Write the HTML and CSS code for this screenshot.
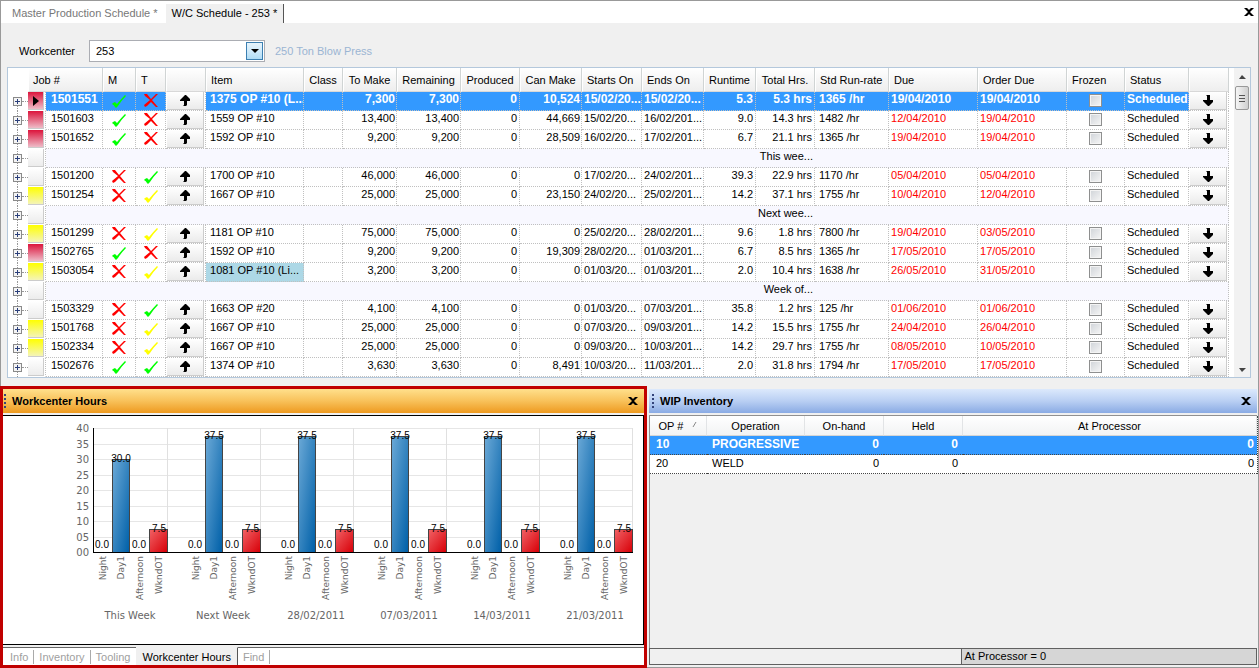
FILE: index.html
```html
<!DOCTYPE html>
<html lang="en">
<head>
<meta charset="utf-8">
<title>W/C Schedule - 253</title>
<link rel="stylesheet" href="styles.css">
</head>
<body>
<svg class="defs" aria-hidden="true">
  <symbol id="i-check" viewBox="0 0 14 13"><path d="M0 9 L1 8 L3 7 L5 9 Q9 4 13 0 L14 1 Q9 6 6 11 L4 13 L3 12 Q2 10 0 9Z" fill="currentColor"/></symbol>
  <symbol id="i-cross" viewBox="0 0 14 13"><path d="M0 0 L3 0 L7 5 L12 0 L14 0 L8 6 L13 12 L14 13 L12 13 L7 8 L3 12 L1 13 L0 11 L6 6 L1 2Z" fill="currentColor"/></symbol>
  <symbol id="i-up" viewBox="0 0 11 11"><path d="M5 0 H6 L10 4 V6 H7 V10 L6 11 H3 L4 10 V6 H0 V5Z" fill="#000"/></symbol>
  <symbol id="i-down" viewBox="0 0 11 11"><path d="M5 11 H6 L10 7 V5 H7 V0 H3 L4 1 V5 H0 V6Z" fill="#000"/></symbol>
  <symbol id="i-close" viewBox="0 0 10 8"><path d="M0 0 H3 L5 2 L7 0 H10 L6 4 L10 8 H7 L5 6 L3 8 H0 L4 4Z" fill="#000"/></symbol>
</svg>
<main class="doc">
  <nav class="doc-tabs">
    <button class="doc-tab">Master Production Schedule *</button>
    <button class="doc-tab doc-tab-active">W/C Schedule - 253 *</button>
    <button class="close doc-close" aria-label="Close"><svg class="x-icon"><use href="#i-close"/></svg></button>
  </nav>
  <div class="filter">
    <label class="filter-label" for="wc">Workcenter</label>
    <div class="combo">
      <select id="wc" class="combo-select"><option>253</option></select>
      <span class="combo-arrow"><svg class="combo-icon" viewBox="0 0 8 4"><path d="M0 0H8L4 4Z"/></svg></span>
    </div>
    <span class="filter-note">250 Ton Blow Press</span>
  </div>
  <div class="grid-box">
    <table class="grid">
      <colgroup id="cols"></colgroup>
      <thead>
        <tr>
          <th class="blank"></th><th colspan="2" class="l4">Job #</th><th class="l4">M</th><th class="l4">T</th><th></th>
          <th class="l4">Item</th><th>Class</th><th>To Make</th><th>Remaining</th><th>Produced</th><th>Can Make</th>
          <th class="l4">Starts On</th><th class="l4">Ends On</th><th>Runtime</th><th>Total Hrs.</th><th class="l4">Std Run-rate</th>
          <th class="l4">Due</th><th class="l4">Order Due</th><th class="l4">Frozen</th><th class="l4">Status</th><th></th>
        </tr>
      </thead>
      <tbody id="jobs"></tbody>
    </table>
    <div class="scroll">
      <svg class="scroll-arrow" viewBox="0 0 7 4"><path d="M0 4H7L3 0Z"/></svg>
      <div class="thumb"></div>
      <svg class="scroll-arrow scroll-end" viewBox="0 0 7 4"><path d="M0 0H7L3 4Z"/></svg>
    </div>
  </div>
</main>
<div class="docks">
  <section class="dock dock-hours">
    <header class="title title-hot"><span class="grip"></span><h2 class="title-text">Workcenter Hours</h2>
      <button class="close" aria-label="Close hours"><svg class="x-icon"><use href="#i-close"/></svg></button></header>
    <div class="chart-box"><svg class="chart" id="chart"></svg></div>
    <nav class="tabs">
      <button class="tab">Info</button><button class="tab">Inventory</button><button class="tab">Tooling</button><button class="tab tab-active">Workcenter Hours</button><button class="tab">Find</button>
      <span class="tabs-rest"></span>
    </nav>
  </section>
  <section class="dock dock-wip">
    <header class="title"><span class="grip"></span><h2 class="title-text">WIP Inventory</h2>
      <button class="close" aria-label="Close inventory"><svg class="x-icon"><use href="#i-close"/></svg></button></header>
    <div class="wip-box">
      <table class="wip">
        <colgroup><col style="width:57px"><col style="width:98px"><col style="width:79px"><col style="width:79px"><col style="width:294px"></colgroup>
        <thead><tr><th>OP # <svg class="sort" viewBox="0 0 5 7"><path d="M1 6L4 1"/></svg></th><th>Operation</th><th>On-hand</th><th>Held</th><th>At Processor</th></tr></thead>
        <tbody>
          <tr class="wip-on"><td>10</td><td>PROGRESSIVE</td><td class="num">0</td><td class="num">0</td><td class="num">0</td></tr>
          <tr><td>20</td><td>WELD</td><td class="num">0</td><td class="num">0</td><td class="num">0</td></tr>
        </tbody>
      </table>
    </div>
    <footer class="status"><span class="status-left"></span><span class="status-right">At Processor = 0</span></footer>
  </section>
</div>
<script src="app.js"></script>
</body>
</html>
```

FILE: styles.css
```css
* { box-sizing: border-box; }
body {
  margin: 0;
  min-height: 100vh;
  display: flex;
  flex-direction: column;
  background: #f0f0f0;
  color: #000;
  font: 11px/14px "Liberation Sans", Arial, sans-serif;
}
button, select { font: inherit; color: inherit; margin: 0; padding: 0; border: 0; background: none; border-radius: 0; }
.defs { position: absolute; width: 0; height: 0; }

.doc { border: 1px solid #999; border-bottom: 0; padding-bottom: 8px; }
.doc-tabs { display: flex; align-items: stretch; height: 22px; padding-top: 3px; background: #fff; }
.doc-tab { padding: 0 8px 2px 11px; color: #777; white-space: nowrap; }
.doc-tab-active { padding: 0 6px 2px 6px; background: #f0f0f0; color: #000; border-right: 1px solid #555; }
.close { display: flex; align-items: center; justify-content: center; width: 18px; }
.x-icon { width: 10px; height: 8px; }
.doc-close { margin-left: auto; padding-bottom: 4px; }

.filter { display: flex; align-items: center; height: 44px; padding: 11px 18px 0; }
.filter-label { width: 70px; }
.combo { position: relative; width: 176px; height: 22px; background: #fff; border: 1px solid #abadb3; }
.combo-select { width: 100%; height: 20px; padding: 0 20px 0 6px; appearance: none; }
.combo-arrow {
  position: absolute; top: 1px; right: 1px; width: 17px; height: 18px;
  display: flex; align-items: center; justify-content: center; pointer-events: none;
  border: 1px solid #3c7fb1; background: linear-gradient(#e6f4fc, #d0eafa 50%, #b0dcf5);
}
.combo-icon { width: 8px; height: 4px; }
.filter-note { margin-left: 10px; color: #9bb5d3; }

.grid-box { display: flex; margin: 0 7px 0 6px; border: 1px solid #b4c8dc; background: #fff; }
.grid { flex: 1; width: 0; margin-right: 5px; table-layout: fixed; border-spacing: 0; }
.grid th {
  height: 24px; padding: 0 2px 0 1px; overflow: hidden; font-weight: normal; text-align: center; white-space: nowrap;
  background: linear-gradient(#fff, #f6f6f6 50%, #eee);
  border-left: 1px solid #fff; border-right: 1px solid #d0d4d4; border-bottom: 1px solid #d8d8d8;
}
.grid th.l4 { text-align: left; padding-left: 4px; }
.grid th.blank { background: #fff; border-color: #fff; }
.grid td {
  height: 19px; padding: 0 0 0 4px; overflow: hidden; white-space: nowrap; vertical-align: top;
  border-right: 1px dotted #c0c0c0; border-bottom: 1px dotted #c0c0c0;
}
.grid td.tree { position: relative; border: 0; padding: 0; background: #fff; }
.tree::before { content: ""; position: absolute; left: 9px; top: 0; bottom: 0; border-left: 1px dotted #999; }
.tree::after { content: ""; position: absolute; left: 14px; right: 0; top: 9px; border-top: 1px dotted #999; }
tr:first-child .tree::before { top: 10px; }
.expand {
  position: absolute; z-index: 1; left: 5px; top: 5px; width: 9px; height: 9px; border: 1px solid #8a8a8a;
  background: linear-gradient(#2b3f7a, #2b3f7a) center/5px 1px no-repeat, linear-gradient(#2b3f7a, #2b3f7a) center/1px 5px no-repeat, #f4f4f4;
}
.grid td.mark { padding: 0 1px 0 0; border-bottom-color: #fff; }
.flag { display: flex; align-items: center; justify-content: center; width: 16px; height: 18px; background: linear-gradient(#fff, #ececec); border-right: 1px solid #ccc; border-bottom: 1px solid #ccc; }
.flag-red { background: linear-gradient(#dc143c, #eebcc8); }
.flag-yellow { background: linear-gradient(#ffff00, #f4f4b8); }
.flag-icon { width: 6px; height: 10px; }
.grid td.icon { padding: 2px 0 0; text-align: center; }
.grid td.job { padding-left: 5px; }
.grid td.num { padding: 0 1px; text-align: right; }
.grid td.far { padding-right: 2px; }
.grid td.date { padding: 0 2px; }
.grid td.late { color: #f00; }
.grid td.act { padding: 0 1px; }
.move { display: flex; align-items: center; justify-content: center; width: 100%; height: 18px; background: linear-gradient(#fff, #ebebeb); border-right: 1px solid #ccc; border-bottom: 1px solid #ccc; }
.move-icon { width: 11px; height: 11px; }
.mk { display: block; width: 14px; height: 13px; margin: 0 auto; }
.ok, .warn { margin-top: 1px; }
.ok { color: #0f0; }
.no { color: #f00; }
.warn { color: #ff0; }
.box { appearance: none; display: block; width: 13px; height: 13px; margin: 0 auto; border: 1px solid #8e8f8f; background: linear-gradient(135deg, #cfd3d8, #f6f6f6); box-shadow: inset 0 0 0 1px #f4f4f4; }
.on td { background: #3399ff; color: #fff; font-size: 12px; font-weight: bold; }
.grid .on td.late { color: #fff; }
.grid .on td.mark, .grid .on td.act { background: #fff; }
.grid .hot { background: #add8e6; }
.week td { background: #f8f8ff; border-right-color: #f8f8ff; }
.grid .week td.mark { background: #fff; border-right-color: #c0c0c0; }
.grid .week td:last-child { border-right-color: #c0c0c0; }

.scroll { width: 16px; display: flex; flex-direction: column; align-items: center; padding: 7px 0 5px; background: #f2f2f2; }
.scroll-arrow { width: 7px; height: 4px; fill: #444; }
.scroll-end { margin-top: auto; }
.thumb { width: 14px; height: 24px; margin-top: 7px; border: 1px solid #999; border-radius: 2px; background: repeating-linear-gradient(#555 0 1px, transparent 1px 3px) center/6px 7px no-repeat, linear-gradient(90deg, #f6f6f6, #cfcfcf); }

.docks { flex: 1; display: grid; grid-template-columns: 647fr 612fr; }
.dock { display: flex; flex-direction: column; min-width: 0; }
.dock-hours { border: 3px solid #c00000; }
.dock-wip { padding: 3px 1px 2px 2px; border: solid #999; border-width: 0 1px 1px 0; }
.title { display: flex; align-items: center; height: 24px; margin-bottom: 2px; background: linear-gradient(#dce9fc, #b9cff3 50%, #8aabe4); }
.title-hot { background: linear-gradient(#ffe08c, #f8c15a 50%, #ee9a20); }
.title .close { margin-left: auto; width: 22px; height: 24px; }
.grip { width: 2px; height: 15px; margin: 0 6px 0 1px; background: repeating-linear-gradient(#33437a 0 2px, transparent 2px 4px); }
.dock-wip .grip { margin-left: 3px; }
.title-text { margin: 0; font-size: 11px; font-weight: bold; line-height: 14px; white-space: nowrap; }
.chart-box { flex: 1; display: flex; border: 1px solid #000; border-left: 0; background: #fff; min-height: 220px; }
.chart { width: 100%; flex: 1; font: 10px "DejaVu Sans", Verdana, sans-serif; fill: #666; }
.chart .val { font: 10px "Liberation Sans", Arial, sans-serif; fill: #000; }
.chart .shift { font-size: 9px; }
.tabs { display: flex; height: 20px; padding-top: 2px; }
.tab { position: relative; padding: 0 6px 0 5px; color: #a0a0a0; background: #fff; border-top: 1px solid #666; white-space: nowrap; }
.tab:first-child { padding-left: 7px; }
.tab::after { content: ""; position: absolute; right: 0; top: 2px; bottom: 1px; border-right: 1px solid #aaa; }
.tab:nth-child(3)::after { display: none; }
.tab-active { padding: 0 6px; color: #000; background: #f0f0f0; border-top-color: #f0f0f0; border-right: 1px solid #555; }
.tab-active::after { display: none; }
.tabs-rest { flex: 1; background: #fff; border-top: 1px solid #666; }

.wip-box { flex: 1; border-top: 1px solid #909090; border-left: 1px solid #909090; }
.wip { width: 100%; table-layout: fixed; border-spacing: 0; border-right: 1px dotted #444; }
.wip th { height: 20px; padding: 0; font-weight: normal; background: linear-gradient(#fff, #f2f3f4); border-right: 1px solid #e2e4e6; border-bottom: 1px solid #d5d5d5; }
.wip td { height: 19px; padding: 0 5px 3px; background: #fff; border-bottom: 1px dotted #444; line-height: 14px; }
.wip td:first-child { padding-left: 6px; }
.wip td.num { text-align: right; }
.wip td.num:last-child { padding-right: 3px; }
.wip .wip-on td { background: #3399ff; color: #fff; font-size: 12px; font-weight: bold; }
.sort { width: 5px; height: 7px; margin-left: 6px; fill: none; stroke: #888; vertical-align: 2px; }
.status { display: grid; grid-template-columns: 312fr 295fr; height: 17px; border: 1px solid #606060; }
.status-right { padding-left: 2px; line-height: 14px; background: #d6d6d6; border-left: 1px solid #606060; }
```

FILE: app.js
```js
const widths = [20, 18, 57, 33, 30, 40, 98, 39, 54, 64, 59, 62, 60, 62, 52, 59, 74, 89, 89, 58, 64, 40];
document.getElementById('cols').innerHTML = widths.map(w => `<col style="width:${w}px">`).join('');

// flag | job | M | T | item | make | remaining | can make | start | end | runtime | total | rate | due | order due
const jobs = `
red|1501551|ok|no|1375 OP #10 (L...|7,300|7,300|10,524|15/02/20...|15/02/20...|5.3|5.3 hrs|1365 /hr|19/04/2010|19/04/2010
red|1501603|ok|no|1559 OP #10|13,400|13,400|44,669|15/02/20...|16/02/201...|9.0|14.3 hrs|1482 /hr|12/04/2010|19/04/2010
red|1501652|ok|no|1592 OP #10|9,200|9,200|28,509|16/02/20...|17/02/201...|6.7|21.1 hrs|1365 /hr|19/04/2010|19/04/2010
This wee...
|1501200|no|ok|1700 OP #10|46,000|46,000|0|17/02/20...|24/02/201...|39.3|22.9 hrs|1170 /hr|05/04/2010|05/04/2010
yellow|1501254|no|warn|1667 OP #10|25,000|25,000|23,150|24/02/20...|25/02/201...|14.2|37.1 hrs|1755 /hr|10/04/2010|12/04/2010
Next wee...
yellow|1501299|no|warn|1181 OP #10|75,000|75,000|0|25/02/20...|28/02/201...|9.6|1.8 hrs|7800 /hr|19/04/2010|03/05/2010
red|1502765|ok|no|1592 OP #10|9,200|9,200|19,309|28/02/20...|01/03/201...|6.7|8.5 hrs|1365 /hr|17/05/2010|17/05/2010
yellow|1503054|no|warn|1081 OP #10 (Li...|3,200|3,200|0|01/03/20...|01/03/201...|2.0|10.4 hrs|1638 /hr|26/05/2010|31/05/2010
Week of...
|1503329|no|ok|1663 OP #20|4,100|4,100|0|01/03/20...|07/03/201...|35.8|1.2 hrs|125 /hr|01/06/2010|01/06/2010
yellow|1501768|no|warn|1667 OP #10|25,000|25,000|0|07/03/20...|09/03/201...|14.2|15.5 hrs|1755 /hr|24/04/2010|26/04/2010
yellow|1502334|no|warn|1667 OP #10|25,000|25,000|0|09/03/20...|10/03/201...|14.2|29.7 hrs|1755 /hr|08/05/2010|10/05/2010
|1502676|ok|ok|1374 OP #10|3,630|3,630|8,491|10/03/20...|11/03/201...|2.0|31.8 hrs|1794 /hr|17/05/2010|17/05/2010`.trim().split('\n');

const td = (text, cls = '') => `<td class="${cls}">${text}</td>`;
const mark = k => td(`<svg class="mk ${k}"><use href="#i-${k === 'no' ? 'cross' : 'check'}"/></svg>`, 'icon');
const move = d => td(`<button class="move" aria-label="Move ${d}"><svg class="move-icon"><use href="#i-${d}"/></svg></button>`, 'act');
const tree = td('<button class="expand" aria-label="Expand"></button>', 'tree');
const pointer = '<svg class="flag-icon" viewBox="0 0 6 10"><path d="M0 0L6 5L0 10Z"/></svg>';

document.getElementById('jobs').innerHTML = jobs.map((line, i) => {
  const c = line.split('|');
  if (c.length === 1) {
    return `<tr class="week">${tree}${td('<span class="flag"></span>', 'mark')}<td colspan="13"></td>${td(line, 'num')}<td colspan="6"></td></tr>`;
  }
  return `<tr class="${i === 0 ? 'on' : ''}">` + tree +
    td(`<span class="flag flag-${c[0]}">${i === 0 ? pointer : ''}</span>`, 'mark') +
    td(c[1], 'job') + mark(c[2]) + mark(c[3]) + move('up') +
    td(c[4], c[1] === '1503054' ? 'hot' : '') + td('') +
    td(c[5], 'num') + td(c[6], 'num') + td('0', 'num far') + td(c[7], 'num') +
    td(c[8], 'date') + td(c[9], 'date') + td(c[10], 'num far') + td(c[11], 'num far') + td(c[12]) +
    td(c[13], 'date late') + td(c[14], 'date late') +
    td(`<input type="checkbox" class="box" aria-label="Frozen ${c[1]}">`, 'icon') +
    td('Scheduled', 'date') + move('down') + '</tr>';
}).join('');

// Hours chart: four shifts per week on a 0-40 scale
const left = 90, base = 136, height = 124, pitch = 93;
const weeks = ['This Week', 'Next Week', '28/02/2011', '07/03/2011', '14/03/2011', '21/03/2011'];
const shifts = ['Night', 'Day1', 'Afternoon', 'WkndOT'];
const edges = [0, 19, 37, 56, 75];
const right = left + pitch * 5 + 75;
const yOf = v => Math.round(base - v * height / 40);
let out = `<defs>
<linearGradient id="blue" x1="0" y1="0" x2="1" y2="1"><stop offset="0" stop-color="#6aa8d6"/><stop offset="1" stop-color="#0060a8"/></linearGradient>
<linearGradient id="rose" x1="0" y1="0" x2="1" y2="1"><stop offset="0" stop-color="#f06064"/><stop offset="1" stop-color="#d80008"/></linearGradient></defs>`;
for (let v = 0; v <= 40; v += 5) {
  const y = yOf(v);
  out += `<rect x="${left}" y="${y}" width="${right - left}" height="1" fill="#e6e6e6"/>
    <text x="${left - 4}" y="${y + 4}" text-anchor="end">${String(v).padStart(2, '0')}</text>`;
}
weeks.forEach((week, w) => {
  const x0 = left + w * pitch;
  out += `<rect x="${x0 + 74}" y="${base - height}" width="1" height="${height}" fill="#e0e0e0"/>`;
  [0, w ? 37.5 : 30, 0, 7.5].forEach((v, s) => {
    const x = x0 + edges[s], width = edges[s + 1] - edges[s], mid = x + Math.round(width / 2);
    const y = yOf(v);
    if (v) out += `<rect x="${x}" y="${y}" width="${width}" height="${base - y}" fill="#444"/>
      <rect x="${x + 1}" y="${y + 1}" width="${width - 2}" height="${base - y - 1}" fill="url(#${s === 1 ? 'blue' : 'rose'})"/>`;
    out += `<text class="val" x="${mid - (v ? 0 : 1)}" y="${v ? y + 3 : base - 4}" text-anchor="middle">${v.toFixed(1)}</text>
      <text class="shift" transform="translate(${mid + 3} ${base + 4}) rotate(-90)" text-anchor="end">${shifts[s]}</text>`;
  });
  out += `<text x="${x0 + 37}" y="${base + 67}" text-anchor="middle">${week}</text>`;
});
out += `<rect x="${left}" y="${base - height}" width="1" height="${height}" fill="#000"/><rect x="${left}" y="${base}" width="${right - left}" height="1" fill="#000"/>`;
document.getElementById('chart').innerHTML = out;
```
